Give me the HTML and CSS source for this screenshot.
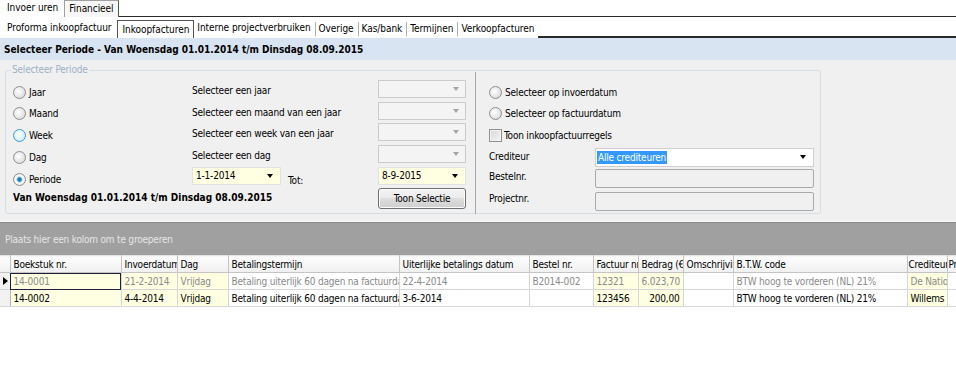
FILE: index.html
```html
<!DOCTYPE html>
<html lang="nl">
<head>
    <meta charset="UTF-8">
    <title>Inkoopfacturen</title>
    <link rel="stylesheet" href="styles.css">
</head>
<body>
    <div class="tabs tabs-main">
        <span class="tab">Invoer uren</span>
        <span class="tab active">Financieel</span>
        <span class="tab-fill"></span>
    </div>

    <div class="tabs tabs-sub">
        <span class="tab">Proforma inkoopfactuur</span>
        <span class="tab active">Inkoopfacturen</span>
        <span class="tab">Interne projectverbruiken</span>
        <span class="tab sep">Overige</span>
        <span class="tab sep">Kas/bank</span>
        <span class="tab sep">Termijnen</span>
        <span class="tab sep">Verkoopfacturen</span>
        <span class="tab-fill"></span>
    </div>

    <div class="title-bar">Selecteer Periode - Van Woensdag 01.01.2014 t/m Dinsdag 08.09.2015</div>

    <div class="filter-panel">
        <fieldset class="group">
            <legend>Selecteer Periode</legend>

            <div class="period">
                <label class="opt"><span class="radio"></span>Jaar</label>
                <span class="lbl">Selecteer een jaar</span>
                <span class="combo disabled"><span class="arrow"></span></span>

                <label class="opt"><span class="radio"></span>Maand</label>
                <span class="lbl">Selecteer een maand van een jaar</span>
                <span class="combo disabled"><span class="arrow"></span></span>

                <label class="opt"><span class="radio hover"></span>Week</label>
                <span class="lbl">Selecteer een week van een jaar</span>
                <span class="combo disabled"><span class="arrow"></span></span>

                <label class="opt"><span class="radio"></span>Dag</label>
                <span class="lbl">Selecteer een dag</span>
                <span class="combo disabled"><span class="arrow"></span></span>

                <label class="opt"><span class="radio checked"></span>Periode</label>
                <span class="date-row">
                    <span class="combo date">1-1-2014<span class="arrow"></span></span>
                    <span class="lbl">Tot:</span>
                </span>
                <span class="combo date">8-9-2015<span class="arrow"></span></span>

                <span class="summary">Van Woensdag 01.01.2014 t/m Dinsdag 08.09.2015</span>
                <button class="btn">Toon Selectie</button>
            </div>

            <div class="filters">
                <label class="opt wide"><span class="radio"></span>Selecteer op invoerdatum</label>
                <label class="opt wide"><span class="radio"></span>Selecteer op factuurdatum</label>
                <label class="opt wide"><span class="check"></span>Toon inkoopfactuurregels</label>

                <span class="lbl">Crediteur</span>
                <span class="combo open"><span class="sel">Alle crediteuren</span><span class="arrow"></span></span>

                <span class="lbl">Bestelnr.</span>
                <span class="field"></span>

                <span class="lbl">Projectnr.</span>
                <span class="field"></span>
            </div>
        </fieldset>
    </div>

    <div class="grid">
        <div class="group-panel">Plaats hier een kolom om te groeperen</div>
        <table class="data">
            <colgroup>
                <col class="w-ind">
                <col class="w-boek">
                <col class="w-inv">
                <col class="w-dag">
                <col class="w-term">
                <col class="w-uit">
                <col class="w-best">
                <col class="w-fact">
                <col class="w-bedr">
                <col class="w-oms">
                <col class="w-btw">
                <col class="w-cred">
                <col class="w-f">
            </colgroup>
            <thead>
                <tr>
                    <th></th>
                    <th>Boekstuk nr.</th>
                    <th>Invoerdatum</th>
                    <th>Dag</th>
                    <th>Betalingstermijn</th>
                    <th>Uiterlijke betalings datum</th>
                    <th>Bestel nr.</th>
                    <th>Factuur nr.</th>
                    <th>Bedrag (€)</th>
                    <th>Omschrijving</th>
                    <th>B.T.W. code</th>
                    <th class="tight">Crediteur</th>
                    <th class="tight">Project</th>
                </tr>
            </thead>
            <tbody>
                <tr class="current">
                    <td class="ind"><span class="pointer"></span></td>
                    <td class="ro focus">14-0001</td>
                    <td class="ro">21-2-2014</td>
                    <td class="ro">Vrijdag</td>
                    <td>Betaling uiterlijk 60 dagen na factuurdatum</td>
                    <td>22-4-2014</td>
                    <td>B2014-002</td>
                    <td class="ro">12321</td>
                    <td class="ro num">6.023,70</td>
                    <td></td>
                    <td>BTW hoog te vorderen (NL) 21%</td>
                    <td class="ro">De Nationale</td>
                    <td></td>
                </tr>
                <tr>
                    <td class="ind"></td>
                    <td class="ro">14-0002</td>
                    <td class="ro">4-4-2014</td>
                    <td class="ro">Vrijdag</td>
                    <td>Betaling uiterlijk 60 dagen na factuurdatum</td>
                    <td>3-6-2014</td>
                    <td></td>
                    <td class="ro">123456</td>
                    <td class="ro num">200,00</td>
                    <td></td>
                    <td>BTW hoog te vorderen (NL) 21%</td>
                    <td class="ro">Willems artikelen</td>
                    <td></td>
                </tr>
            </tbody>
        </table>
    </div>
</body>
</html>
```

FILE: styles.css
```css
body {
    margin: 0;
    width: 956px;
    height: 374px;
    overflow: hidden;
    background-color: #ffffff;
    font-family: "DejaVu Sans Condensed", "DejaVu Sans", sans-serif;
    font-size: 10px;
    letter-spacing: -0.2px;
    color: #000000;
}

/* tabbladen */
.tabs {
    display: flex;
    align-items: stretch;
    height: 17px;
    line-height: 16px;
    letter-spacing: -0.05px;
    white-space: nowrap;
}

.tabs-sub {
    margin-top: 3px;
    height: 18px;
}

.tab {
    padding: 0 4px 0 7px;
    border-bottom: 1px solid transparent;
}

.tabs-main .tab.active {
    margin-left: 2px;
    padding: 0 4px;
    background-color: #f7f7f7;
    border: 1px solid #a0a0a0;
    border-right-color: #555555;
    border-bottom: none;
}

.tabs-sub .tab.active {
    margin-left: 2px;
    padding: 1px 4px 0 4px;
    border: 1px solid #555555;
    border-bottom: none;
}

.tabs-sub .tab.active + .tab {
    padding-left: 3px;
}

.tab.sep {
    padding-left: 3px;
    border-left: 1px solid #b0b0b0;
    margin: 2px 0 1px 0;
    line-height: 14px;
}

.tab-fill {
    flex: 1;
    border-bottom: 1px solid #2a2a2a;
}

.tabs-sub .tab-fill {
    border-bottom: 2px solid #2a2a2a;
}

.title-bar {
    height: 22px;
    line-height: 23px;
    padding-left: 4px;
    background-color: #d8e4f1;
    font-weight: bold;
    letter-spacing: 0;
    white-space: nowrap;
}

/* filter */
.filter-panel {
    height: 162px;
    padding: 4px 0 0 5px;
    box-sizing: border-box;
    background-color: #f0f0f0;
    border-bottom: 1px solid #fafafa;
}

.group {
    display: flex;
    width: 816px;
    height: 150px;
    margin: 0;
    padding: 0;
    box-sizing: border-box;
    border: 1px solid #d5dde5;
    border-radius: 3px;
}

.group legend {
    margin-left: 5px;
    padding: 0 1px;
    color: #9db1c7;
    line-height: 12px;
}

.period {
    display: grid;
    grid-template-columns: 179px 186px 88px;
    grid-auto-rows: 18px;
    row-gap: 3.7px;
    width: 470px;
    height: 142px;
    padding: 8px 0 0 7px;
    box-sizing: border-box;
    border-right: 1px solid #a8a8a8;
    margin-top: -4px;
}

.opt {
    display: flex;
    align-items: center;
    padding-top: 6px;
    white-space: nowrap;
}

.period .opt:nth-last-of-type(1) {
    padding-top: 8px;
}

.lbl {
    padding-top: 4px;
    line-height: 14px;
    white-space: nowrap;
}

.radio {
    display: inline-block;
    width: 11px;
    height: 11px;
    margin-right: 3px;
    border: 1px solid #8f8f8f;
    border-radius: 50%;
    background: radial-gradient(circle at 40% 40%, #ffffff 0%, #e4e4e4 60%, #cfcfcf 100%);
}

.radio.hover {
    border-color: #3c9bd6;
    background: radial-gradient(circle at 40% 40%, #ffffff 0%, #d9f0fc 60%, #a9dbf6 100%);
}

.radio.checked {
    background: radial-gradient(circle, #0f6fa8 0%, #2a8fce 25%, #9fd2ee 33%, #ffffff 45%, #e4e4e4 75%, #cfcfcf 100%);
}

.check {
    display: inline-block;
    width: 11px;
    height: 11px;
    margin-right: 2px;
    border: 1px solid #8f8f8f;
    background: linear-gradient(135deg, #d6d6d6, #f7f7f7);
    box-shadow: inset 0 0 0 1px #f4f4f4;
}

.combo {
    position: relative;
    display: block;
    height: 18px;
    box-sizing: border-box;
    padding: 0 0 0 3px;
    line-height: 15px;
    border: 1px solid #d2d2d2;
    background-color: #ffffff;
    white-space: nowrap;
}

.combo.disabled {
    background-color: #f4f4f4;
    border-color: #cbcbcb;
}

.combo.date {
    background-color: #ffffe1;
    border-color: #e2e2e2;
    line-height: 16px;
}

.arrow {
    position: absolute;
    right: 7px;
    top: 6px;
    width: 0;
    height: 0;
    border-left: 3.5px solid transparent;
    border-right: 3.5px solid transparent;
    border-top: 4px solid #000000;
}

.combo.disabled .arrow {
    border-top-color: #a5a5a5;
    right: 6px;
}

.date-row {
    display: flex;
    gap: 7px;
}

.date-row .combo {
    width: 89px;
}

.date-row .lbl {
    padding-top: 7px;
}

.summary {
    grid-column: 1 / span 2;
    font-weight: bold;
    letter-spacing: 0;
    padding-top: 4px;
    white-space: nowrap;
}

.btn {
    height: 21px;
    margin: 0;
    padding: 0;
    font-family: inherit;
    font-size: 10px;
    letter-spacing: -0.2px;
    color: #000000;
    border: 1px solid #707070;
    border-radius: 3px;
    background: linear-gradient(#f3f3f3 0%, #ebebeb 49%, #dddddd 50%, #cfcfcf 100%);
    box-shadow: inset 0 0 0 1px #fcfcfc;
}

.filters {
    display: grid;
    grid-template-columns: 106px 219px;
    grid-template-rows: 22px 21px 23px 20px 22px 22px;
    align-content: start;
    padding: 8px 0 0 13px;
    margin-top: -4px;
}

.filters .opt.wide {
    grid-column: 1 / span 2;
    padding-top: 2px;
}

.combo.open {
    height: 19px;
    margin-top: 2px;
    padding-left: 1px;
    border-color: #cfcfcf;
    line-height: 17px;
}

.sel {
    background-color: #3399ff;
    color: #ffffff;
    padding: 1px 1px;
}

.field {
    display: block;
    height: 19px;
    margin-top: 3px;
    box-sizing: border-box;
    border: 1px solid #a9a9a9;
    border-radius: 2px;
    background-color: #f0f0f0;
}

.field + .lbl + .field {
    margin-top: 4px;
}

/* grid */
.grid {
    background-color: #ffffff;
}

.group-panel {
    height: 32px;
    line-height: 34px;
    padding-left: 5px;
    background-color: #a0a0a0;
    border-top: 1px solid #8a8a8a;
    color: #e6e6e6;
    white-space: nowrap;
}

.data {
    table-layout: fixed;
    width: 968px;
    border-collapse: collapse;
}

.w-ind { width: 10px; }
.w-boek { width: 111px; }
.w-inv { width: 56px; }
.w-dag { width: 51px; }
.w-term { width: 171px; }
.w-uit { width: 130px; }
.w-best { width: 64px; }
.w-fact { width: 45px; }
.w-bedr { width: 45px; }
.w-oms { width: 50px; }
.w-btw { width: 174px; }
.w-cred { width: 40px; }
.w-f { width: 31px; }

.data th,
.data td {
    height: 16px;
    padding: 0 3px;
    overflow: hidden;
    white-space: nowrap;
    text-overflow: clip;
    text-align: left;
    font-weight: normal;
    line-height: 15px;
}

.data th {
    background: linear-gradient(#fdfdfd, #f0f0f0);
    border-right: 1px solid #c4c4c4;
    border-bottom: 1px solid #c4c4c4;
    border-top: 1px solid #e4e4e4;
}

.data th.tight {
    padding: 0 1px;
}

.data td {
    border-right: 1px solid #d6d6d6;
    border-bottom: 1px solid #d6d6d6;
}

.data td.ro {
    background-color: #ffffe1;
}

.data td.num {
    text-align: right;
}

.data td.ind {
    padding: 0;
    background-color: #f2f2f2;
    border-right: 1px solid #b4b4b4;
}

.data tr.current td {
    color: #8a8a8a;
}

.data td.focus {
    outline: 1px solid #1f1f3a;
    outline-offset: -1px;
}

.pointer {
    display: block;
    width: 0;
    height: 0;
    margin-left: 3px;
    border-top: 4px solid transparent;
    border-bottom: 4px solid transparent;
    border-left: 5px solid #000000;
}
```
